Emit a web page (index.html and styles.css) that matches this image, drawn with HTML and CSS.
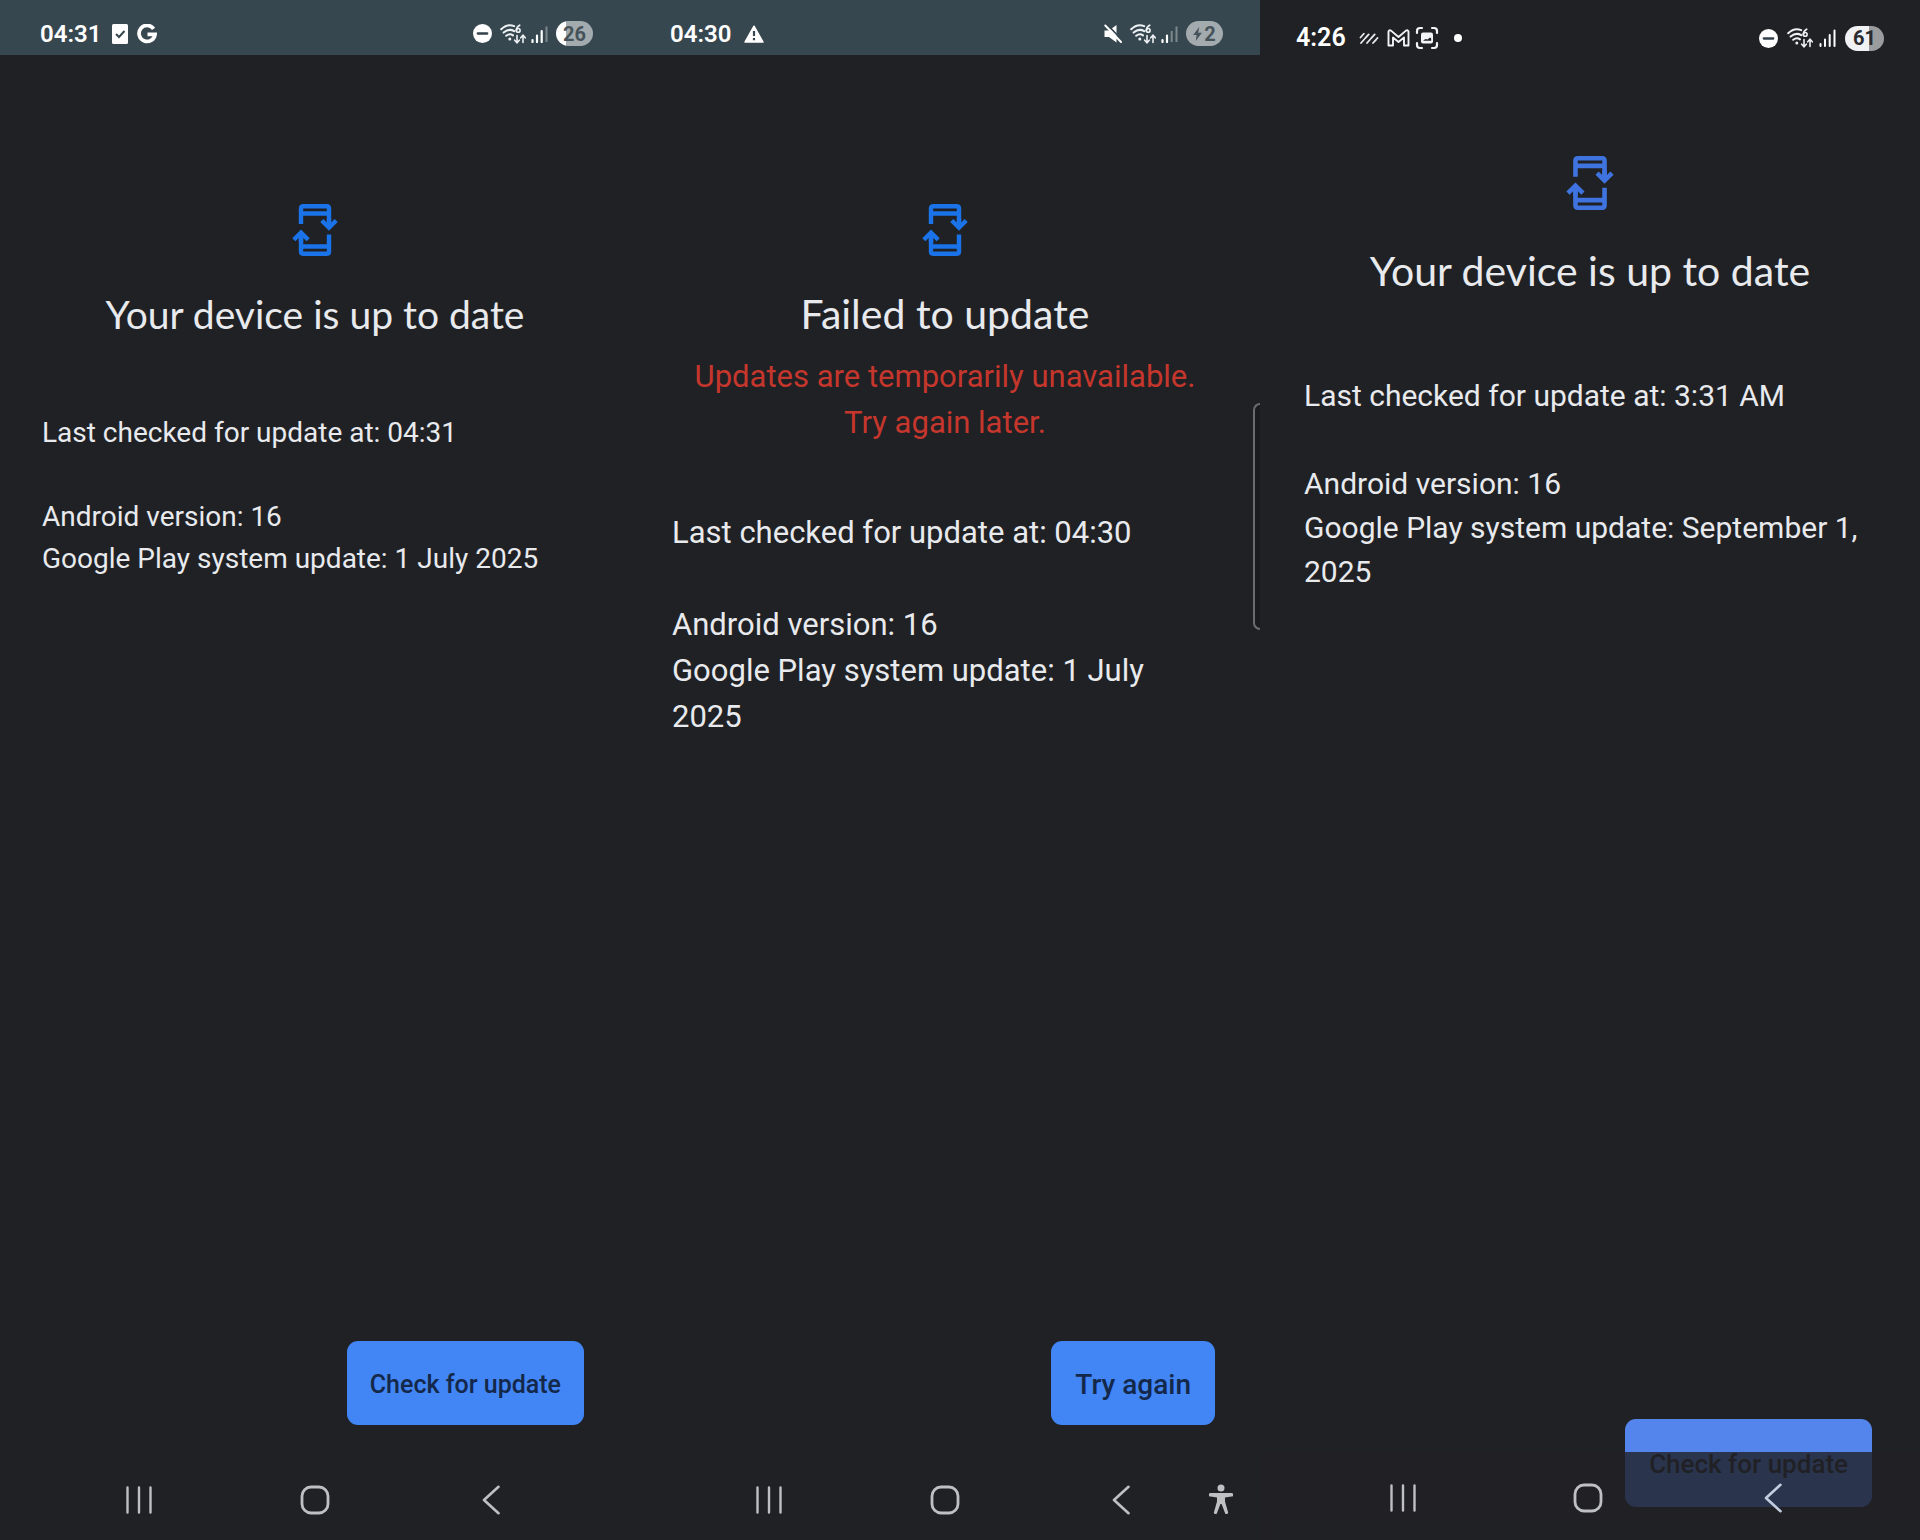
FILE: index.html
```html
<!DOCTYPE html>
<html lang="en">
<head>
<meta charset="utf-8">
<meta name="viewport" content="width=device-width, initial-scale=1">
<title>System update</title>
<link rel="stylesheet" href="styles.css">
</head>
<body>
<svg class="sprite" aria-hidden="true">
  <symbol id="dnd" viewBox="0 0 20 20"><circle cx="10" cy="10" r="10" fill="#fff"/><path d="M5 10h10" stroke="#33424a" stroke-width="2.4" stroke-linecap="round"/></symbol>
  <symbol id="wifi" viewBox="0 0 26 20"><g fill="none" stroke="#eef1f3" stroke-width="2" stroke-linecap="round"><path d="M1.2 5.2Q7.5-.8 14.200 2.200M3.600 8.600Q9 4 14.200 7.200M6.200 11.800Q9.800 9 13 11.400"/><path d="M19.600 1.200Q16.400 3 16.400 6.400" stroke-width="1.800"/><circle cx="18.200" cy="6.400" r="1.900" stroke-width="1.600"/><path d="M17 11.500v7M14.700 16.200L17 18.700l2.300-2.500M23 18.500v-7M20.700 13.800L23 11.300l2.300 2.500" stroke-width="1.600"/></g><circle cx="9.800" cy="15" r="1.500" fill="#eef1f3"/></symbol>
  <symbol id="update" viewBox="0 0 46 52"><g fill="none" stroke="currentColor" stroke-width="4.400"><path d="M9 20V4.500Q9 2.200 11.300 2.200h23.400Q37 2.200 37 4.500V22M9 32v15.500Q9 49.800 11.300 49.800h23.400Q37 49.800 37 47.500V30.500M9 9.500h28M9 42.500h28"/><path d="M29.800 16.500L37 23.700l7.200-7.200M1.800 35.800L9 28.600l7.200 7.200M37 14v10M9 38v-9"/></g></symbol>
  <symbol id="recents" viewBox="0 0 26 30"><path d="M1.500 2.500v25M13 2.500v25M24.500 2.500v25" stroke="#bfc0c2" stroke-width="2.400" stroke-linecap="round"/></symbol>
  <symbol id="home" viewBox="0 0 30 30"><rect x="2" y="2" width="26" height="26" rx="9" fill="none" stroke="#bfc0c2" stroke-width="2.800"/></symbol>
  <symbol id="back" viewBox="0 0 18 30"><path d="M16.500 1.800L2 15l14.500 13.200" fill="none" stroke="currentColor" stroke-width="2.600" stroke-linecap="round" stroke-linejoin="round"/></symbol>
</svg>
<div class="screens">
  <section class="screen screen-a">
    <header class="status">
      <div class="status-left">
        <time>04:31</time>
        <svg class="ic-check" viewBox="0 0 16 20"><rect width="16" height="20" rx="1.500" fill="#fff"/><path d="M4 10l3 3 5.500-6" fill="none" stroke="#37474f" stroke-width="2"/></svg>
        <svg class="ic-g" viewBox="0 0 20 20"><path d="M16.600 4.800A8 8 0 1 0 18 10.400H10.500" fill="none" stroke="#fff" stroke-width="3.800"/></svg>
      </div>
      <div class="status-right">
        <svg class="ic-dnd"><use href="#dnd"/></svg>
        <svg class="ic-wifi"><use href="#wifi"/></svg>
        <svg class="ic-signal" viewBox="0 0 17 18"><path d="M1.500 15v2M6 10.500V17M10.700 6v11" stroke="#fff" stroke-width="2.200" stroke-linecap="round"/><path d="M15.500 1.500V17" stroke="#7d888d" stroke-width="2"/></svg>
        <span class="battery battery-26">26</span>
      </div>
    </header>
    <main class="content">
      <svg class="hero"><use href="#update"/></svg>
      <h1>Your device is up to date</h1>
      <div class="info">
        <p>Last checked for update at: 04:31</p>
        <p>Android version: 16<br>Google Play system update: 1 July 2025</p>
      </div>
      <button class="action" type="button">Check for update</button>
    </main>
    <nav class="nav" aria-label="System navigation">
      <button type="button" aria-label="Recents"><svg class="ic-recents"><use href="#recents"/></svg></button>
      <button type="button" aria-label="Home"><svg class="ic-home"><use href="#home"/></svg></button>
      <button type="button" aria-label="Back"><svg class="ic-back"><use href="#back"/></svg></button>
    </nav>
  </section>

  <section class="screen screen-b">
    <header class="status">
      <div class="status-left">
        <time>04:30</time>
        <svg class="ic-warn" viewBox="0 0 20 18"><path d="M10 1.200L19 17H1z" fill="#fff" stroke="#fff" stroke-width="1.500" stroke-linejoin="round"/><path d="M10 6v5M10 13v2.300" stroke="#37474f" stroke-width="2.200"/></svg>
      </div>
      <div class="status-right">
        <svg class="ic-mute" viewBox="0 0 18 19"><path d="M.5 6.500h4.500L12.500 1v17.500L5 13H.5z" fill="#fff"/><path d="M2.800 .2L18 16" stroke="#37474f" stroke-width="1.800"/><path d="M1.300 1.500L17 18" stroke="#fff" stroke-width="2" stroke-linecap="round"/></svg>
        <svg class="ic-wifi"><use href="#wifi"/></svg>
        <svg class="ic-signal" viewBox="0 0 17 18"><path d="M1.500 15v2M6 10.500V17" stroke="#fff" stroke-width="2.200" stroke-linecap="round"/><path d="M10.700 6v11M15.500 1.500V17" stroke="#7d888d" stroke-width="2"/></svg>
        <span class="battery battery-2"><svg class="ic-bolt" viewBox="0 0 10 16"><path d="M7 0L0 9h4L3 16l7-9.500H5.800z" fill="#46535a"/></svg>2</span>
      </div>
    </header>
    <main class="content">
      <svg class="hero"><use href="#update"/></svg>
      <h1>Failed to update</h1>
      <p class="error" role="alert">Updates are temporarily unavailable. Try again later.</p>
      <div class="info">
        <p>Last checked for update at: 04:30</p>
        <p>Android version: 16<br>Google Play system update: 1 July 2025</p>
      </div>
      <button class="action" type="button">Try again</button>
    </main>
    <nav class="nav" aria-label="System navigation">
      <button type="button" aria-label="Recents"><svg class="ic-recents"><use href="#recents"/></svg></button>
      <button type="button" aria-label="Home"><svg class="ic-home"><use href="#home"/></svg></button>
      <button type="button" aria-label="Back"><svg class="ic-back"><use href="#back"/></svg></button>
      <button class="access" type="button" aria-label="Accessibility"><svg class="ic-access" viewBox="0 0 24 30"><g fill="#bfc0c2"><circle cx="12" cy="4" r="3.500"/><path d="M1.500 9h21a1.500 1.500 0 0 1 0 3.600L16 13.500v4L19 28a1.500 1.500 0 0 1-3 1L12.600 20h-1.200L8 29a1.500 1.500 0 0 1-3-1l3-10.500v-4l-6.500-.9A1.500 1.500 0 0 1 1.500 9z"/></g></svg></button>
    </nav>
    <div class="edge-handle"></div>
  </section>

  <section class="screen screen-c">
    <header class="status">
      <div class="status-left">
        <time>4:26</time>
        <svg class="ic-stripes" viewBox="0 0 20 12"><path d="M1.500 5.500L5 1.500M2 11L10.500 1.500M8 11l8.500-9.500M14 11l4.500-5" stroke="#e8eaed" stroke-width="1.800" stroke-linecap="round" stroke-dasharray="5 1.500"/></svg>
        <svg class="ic-mail" viewBox="0 0 22 18"><path d="M1 16.500V2.500Q1.500 .6 3.500 1.600L11 8l7.500-6.400Q20.500 .6 21 2.500v14h-4.500V8.500L11 13 5.500 8.500v8z" fill="none" stroke="#f1f3f4" stroke-width="1.900" stroke-linejoin="round"/></svg>
        <svg class="ic-capture" viewBox="0 0 24 24"><path d="M2 7V5q0-3 3-3h2M17 2h2q3 0 3 3v2M22 17v2q0 3-3 3h-2M7 22H5q-3 0-3-3v-2" fill="none" stroke="#f1f3f4" stroke-width="2.200" stroke-linecap="round"/><rect x="6" y="6.500" width="12" height="11" rx="2" fill="#f1f3f4"/><path d="M8 14.800l2.500-1.800 2 .6L15 11.500l1.200 1v2.300z" fill="#202125"/></svg>
        <svg class="ic-dot" viewBox="0 0 8 8"><circle cx="4" cy="4" r="4" fill="#fff"/></svg>
      </div>
      <div class="status-right">
        <svg class="ic-dnd"><use href="#dnd"/></svg>
        <svg class="ic-wifi"><use href="#wifi"/></svg>
        <svg class="ic-signal" viewBox="0 0 17 18"><path d="M1.500 15v2M6 10.500V17M10.700 6v11M15.500 1.500V17" stroke="#fff" stroke-width="2" stroke-linecap="round"/></svg>
        <span class="battery battery-61">61</span>
      </div>
    </header>
    <main class="content">
      <svg class="hero"><use href="#update"/></svg>
      <h1>Your device is up to date</h1>
      <div class="info">
        <p>Last checked for update at: 3:31 AM</p>
        <p>Android version: 16<br>Google Play system update: September 1, 2025</p>
      </div>
      <button class="action" type="button">Check for update</button>
    </main>
    <nav class="nav" aria-label="System navigation">
      <button type="button" aria-label="Recents"><svg class="ic-recents"><use href="#recents"/></svg></button>
      <button type="button" aria-label="Home"><svg class="ic-home"><use href="#home"/></svg></button>
      <button type="button" aria-label="Back"><svg class="ic-back"><use href="#back"/></svg></button>
    </nav>
  </section>
</div>
</body>
</html>
```
FILE: styles.css
```css
* { box-sizing: border-box; }
body { margin: 0; background: #202125; color: #e8eaed; font-family: Roboto, "Liberation Sans", sans-serif; }
.sprite { position: absolute; width: 0; height: 0; }
h1, p { margin: 0; }
svg { display: block; flex: none; }

.screens { display: grid; grid-template-columns: 21fr 21fr 22fr; min-height: 100vh; }
.screen { position: relative; display: flex; flex-direction: column; min-width: 0; overflow: hidden; }

/* status bar */
.status { display: flex; justify-content: space-between; align-items: center; height: 55px; padding: 12px 37px 0 40px; background: #37474f; color: #fff; }
.status-left, .status-right { display: flex; align-items: center; }
.status-right { gap: 8px; }
.status time { font-size: 24px; font-weight: 600; line-height: 28px; }
.ic-check { width: 16px; height: 20px; margin-left: 11px; }
.ic-g { width: 20px; height: 20px; margin-left: 9px; }
.ic-warn { width: 20px; height: 18px; margin-left: 13px; }
.ic-dnd { width: 19px; height: 19px; }
.ic-mute { width: 18px; height: 19px; }
.ic-wifi { width: 26px; height: 20px; }
.ic-signal { width: 17px; height: 18px; margin-left: -3px; }
.ic-bolt { width: 9px; height: 14px; }
.battery { display: flex; align-items: center; justify-content: center; gap: 2px; width: 37px; height: 25px; border-radius: 13px; font-size: 20px; font-weight: 700; color: #46535a; }
.battery-26 { background: linear-gradient(90deg, #fff 26%, #a3abaf 26%); }
.battery-2 { background: #a3abaf; }
.battery-61 { background: linear-gradient(90deg, #f1f2f3 61%, #9b9c9e 61%); color: #2a2b2f; }

/* page content */
.content { flex: 1; display: flex; flex-direction: column; padding: 149px 42px 0; }
.hero { align-self: center; width: 46px; height: 52px; color: #1a73e8; }
h1 { margin-top: 34px; font-family: Lato, Roboto, sans-serif; font-size: 41px; font-weight: 400; line-height: 48px; text-align: center; }
.error { margin-top: 16px; font-size: 31px; line-height: 46px; text-align: center; color: #c5362c; }
.info { display: flex; flex-direction: column; }
.action { align-self: flex-end; height: 84px; margin-top: auto; padding: 2px 24px 0; border: 0; border-radius: 11px; background: #4285f4; color: #14284a; font-family: inherit; font-weight: 500; }

.screen-a h1 { font-size: 39px; }
.screen-a .info { gap: 42px; margin-top: 74px; font-size: 28px; line-height: 42px; }
.screen-a .action { margin-right: 4px; padding: 2px 23px 0; font-size: 25px; }
.screen-b .info { gap: 46px; margin-top: 64px; font-size: 31px; line-height: 46px; }
.screen-b .action { margin-right: 3px; font-size: 28px; }

/* navigation bar */
.nav { display: grid; grid-template-columns: 1fr 1fr 1fr; align-items: center; height: 115px; padding: 34px 51px 0; }
.nav button { display: flex; justify-content: center; padding: 0; border: 0; background: none; color: #bfc0c2; }
.ic-recents { width: 26px; height: 30px; }
.ic-home { width: 30px; height: 30px; }
.ic-back { width: 18px; height: 30px; }
.ic-access { width: 24px; height: 30px; }
.nav .access { position: absolute; right: 27px; bottom: 26px; }

.edge-handle { position: absolute; top: 403px; right: 0; width: 7px; height: 227px; border: 2px solid #6b6c6f; border-right: 0; border-radius: 8px 0 0 8px; background: #1b1c20; }

/* third device: edge-to-edge page under a translucent navigation bar */
.screen-c .status { height: 76px; padding: 0 36px; background: none; }
.screen-c .status-right { gap: 9px; }
.screen-c time { font-size: 25px; }
.screen-c .battery { width: 39px; }
.screen-c .ic-stripes { width: 20px; height: 12px; margin-left: 13px; }
.screen-c .ic-mail { width: 23px; height: 18px; margin-left: 8px; }
.screen-c .ic-capture { width: 24px; height: 24px; margin-left: 5px; }
.screen-c .ic-dot { width: 8px; height: 8px; margin-left: 15px; }
.screen-c .content { padding: 80px 44px 33px; }
.screen-c .hero { width: 48px; height: 54px; color: #3f74e0; }
.screen-c h1 { margin-top: 37px; }
.screen-c .info { gap: 44px; margin-top: 79px; font-size: 30px; line-height: 44px; }
.screen-c .action { height: 88px; margin-right: 4px; background: #5385ec; color: #202125; font-size: 26px; }
.screen-c .nav { position: absolute; right: 0; bottom: 0; left: 0; height: 88px; padding: 3px 55px 0 51px; background: rgba(32, 33, 37, 0.8); }
.screen-c .nav button { color: #c3cde0; }
```
